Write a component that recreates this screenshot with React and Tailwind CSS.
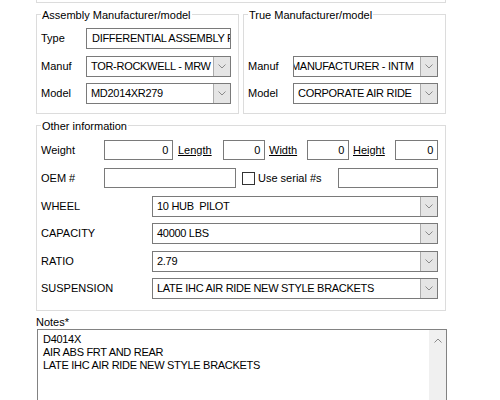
import React from 'react';

const Chevron = ({ up = false }) => (
  <svg width="8" height="5" viewBox="0 0 8 5" className="block">
    <path
      d={up ? 'M0.5 4.5 L4 1 L7.5 4.5' : 'M0.5 0.5 L4 4 L7.5 0.5'}
      fill="none"
      stroke="#8a8a8a"
      strokeWidth="1"
    />
  </svg>
);

const TextBox = ({ value = '', width, height = 'h-[20px]', right = false, shift = '' }) => (
  <div className={`${width} ${height} shrink-0 border border-[#7a7a7a] bg-white flex items-center overflow-hidden whitespace-pre tracking-[-0.3px] ${right ? 'justify-end pr-[4px]' : 'pl-[5px]'}`}>
    <span className={shift}>{value}</span>
  </div>
);

const Combo = ({ value, width, shift = '' }) => (
  <div className={`${width} h-[21px] shrink-0 flex border border-[#7a7a7a] bg-white`}>
    <div className="flex-1 flex items-center overflow-hidden whitespace-pre pl-[4px] tracking-[-0.3px]">
      <span className={shift}>{value}</span>
    </div>
    <div className="w-[17px] shrink-0 bg-[#e5e5e5] border-l border-[#acacac] flex items-center justify-center">
      <Chevron />
    </div>
  </div>
);

const GroupTitle = ({ children }) => (
  <div className="-mt-[7px] ml-[4px] w-fit bg-white px-[1px] leading-[14px]">{children}</div>
);

const Row = ({ label, labelWidth = 'w-[45px]', children, className = '' }) => (
  <div className={`flex items-center pl-[4px] ${className}`}>
    <span className={`${labelWidth} shrink-0`}>{label}</span>
    {children}
  </div>
);

export default function App() {
  return (
    <div className="w-[500px] h-[400px] bg-white overflow-hidden text-[11px] leading-[13px] text-black font-['Liberation_Sans',Arial,sans-serif]">
      <div className="ml-[36px] w-[410px]">
        {/* tail of the group above */}
        <div className="h-[3px] border-x border-b border-[#dcdcdc]" />

        <div className="mt-[11px] flex gap-[4px]">
          <div className="w-[203px] h-[100px] border border-[#dcdcdc] flex flex-col">
            <GroupTitle>Assembly Manufacturer/model</GroupTitle>
            <Row label="Type" className="mt-[6px]">
              <TextBox value="DIFFERENTIAL ASSEMBLY FRONT" width="w-[145px]" height="h-[21px]" />
            </Row>
            <Row label="Manuf" className="mt-[7px]">
              <Combo value="TOR-ROCKWELL - MRW" width="w-[145px]" />
            </Row>
            <Row label="Model" className="mt-[6px]">
              <Combo value="MD2014XR279" width="w-[145px]" />
            </Row>
          </div>

          <div className="w-[203px] h-[100px] border border-[#dcdcdc] flex flex-col">
            <GroupTitle>True Manufacturer/model</GroupTitle>
            <Row label="Manuf" className="mt-[34px]">
              <Combo value="MANUFACTURER - INTM" width="w-[145px]" shift="-ml-[7px]" />
            </Row>
            <Row label="Model" className="mt-[6px]">
              <Combo value="CORPORATE AIR RIDE" width="w-[145px]" />
            </Row>
          </div>
        </div>

        <div className="mt-[11px] h-[186px] border border-[#dcdcdc] flex flex-col">
          <GroupTitle>Other information</GroupTitle>
          <Row label="Weight" labelWidth="w-[63px]" className="mt-[7px]">
            <TextBox value="0" width="w-[69px]" right />
            <span className="w-[50px] shrink-0 pl-[5px] underline">Length</span>
            <TextBox value="0" width="w-[42px]" right />
            <span className="w-[42px] shrink-0 pl-[4px] underline">Width</span>
            <TextBox value="0" width="w-[42px]" right />
            <span className="w-[46px] shrink-0 pl-[4px] underline">Height</span>
            <TextBox value="0" width="w-[43px]" right />
          </Row>
          <Row label="OEM #" labelWidth="w-[63px]" className="mt-[8px]">
            <TextBox width="w-[132px]" />
            <div className="ml-[6px] w-[13px] h-[13px] shrink-0 border border-[#333333] bg-white" />
            <span className="w-[83px] shrink-0 pl-[3px]">Use serial #s</span>
            <TextBox width="w-[100px]" />
          </Row>
          <Row label="WHEEL" labelWidth="w-[111px]" className="mt-[8px]">
            <Combo value="10 HUB  PILOT" width="w-[286px]" />
          </Row>
          <Row label="CAPACITY" labelWidth="w-[111px]" className="mt-[6px]">
            <Combo value="40000 LBS" width="w-[286px]" />
          </Row>
          <Row label="RATIO" labelWidth="w-[111px]" className="mt-[7px]">
            <Combo value="2.79" width="w-[286px]" />
          </Row>
          <Row label="SUSPENSION" labelWidth="w-[111px]" className="mt-[6px]">
            <Combo value="LATE IHC AIR RIDE NEW STYLE BRACKETS" width="w-[286px]" />
          </Row>
        </div>

        <div className="mt-[5px] leading-[13px]">Notes*</div>
        <div className="ml-[1px] w-[410px] h-[90px] border border-[#828282] bg-white flex">
          <div className="flex-1 pl-[5px] pt-[3px] leading-[13px] tracking-[-0.3px]">
            <div>D4014X</div>
            <div>AIR ABS FRT AND REAR</div>
            <div>LATE IHC AIR RIDE NEW STYLE BRACKETS</div>
          </div>
          <div className="w-[17px] shrink-0 bg-[#f0f0f0] flex justify-center pt-[8px]">
            <div className="h-[5px]">
              <Chevron up />
            </div>
          </div>
        </div>
      </div>
    </div>
  );
}
